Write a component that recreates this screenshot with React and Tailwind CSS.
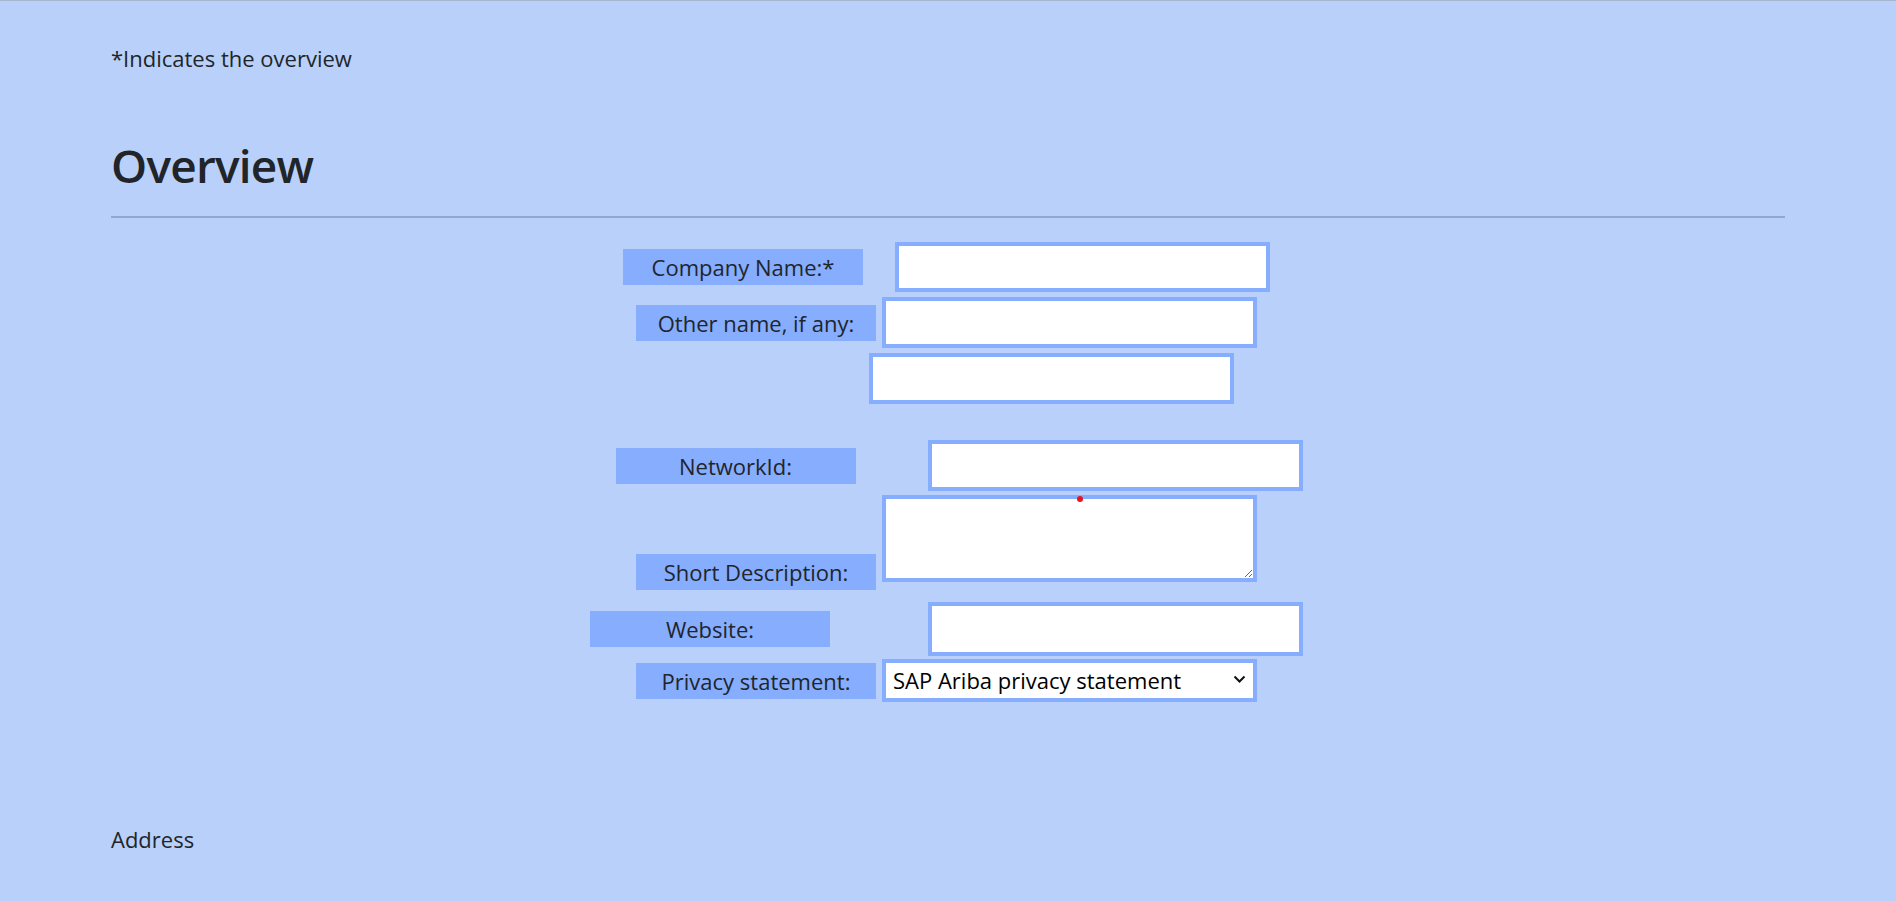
export default function App() {
  const label = "w-[240px] h-[36px] shrink-0 bg-[#86adfe] text-center text-[22px] leading-[36px] text-[#212529]"
  const field = "shrink-0 border-4 border-[#86adfe] bg-white outline-none"

  return (
    <div className="min-h-[901px] bg-[#b9d1fa] border-t border-[#a7b5cf] text-[#212529] font-['Open_Sans','Noto_Sans',sans-serif]">
      <div className="mx-[111px] pt-[42px]">
        <p className="text-[22px] leading-[30px]">*Indicates the overview</p>

        <h1 className="mt-[64px] text-[46px] leading-[56px] font-semibold tracking-[-0.8px]">Overview</h1>
        <div className="mt-[23px] h-[2px] bg-[#91a7cd]" />

        <form className="flex flex-col pr-[3px]">
          <div className="mt-[24px] flex items-center justify-center gap-[32px]">
            <label className={label}>Company Name:*</label>
            <input type="text" className={`${field} w-[375px] h-[50px]`} />
          </div>

          <div className="mt-[5px] flex items-center justify-center gap-[6px]">
            <label className={label}>Other name, if any:</label>
            <input type="text" className={`${field} w-[375px] h-[51px]`} />
          </div>

          <div className="mt-[5px] flex justify-center pl-[209px]">
            <input type="text" className={`${field} w-[365px] h-[51px]`} />
          </div>

          <div className="mt-[36px] flex items-center justify-center gap-[72px] pl-[25px]">
            <label className={label}>NetworkId:</label>
            <input type="text" className={`${field} w-[375px] h-[51px]`} />
          </div>

          <div className="mt-[4px] flex items-start justify-center gap-[6px]">
            <label className={`${label} mt-[59px]`}>Short Description:</label>
            <div className="relative">
              <textarea className={`${field} block w-[375px] h-[87px] resize`} />
              <span className="absolute left-[195px] top-[1px] w-[6px] h-[6px] rounded-full bg-[#e8141e]" />
            </div>
          </div>

          <div className="mt-[12px] flex items-center justify-center gap-[98px]">
            <label className={label}>Website:</label>
            <input type="url" className={`${field} w-[375px] h-[54px]`} />
          </div>

          <div className="mt-[3px] flex items-center justify-center gap-[6px]">
            <label className={label}>Privacy statement:</label>
            <div className="relative">
              <select className={`${field} appearance-none block w-[375px] h-[43px] pl-[7px] text-[22px] text-black`} defaultValue="sap">
                <option value="sap">SAP Ariba privacy statement</option>
              </select>
              <svg className="pointer-events-none absolute right-[11px] top-[16px]" width="13" height="9" viewBox="0 0 13 9" fill="none">
                <path d="M1.5 1.5 L6.5 6.5 L11.5 1.5" stroke="#111" strokeWidth="2" />
              </svg>
            </div>
          </div>
        </form>

        <p className="mt-[122px] text-[22px] leading-[30px]">Address</p>
      </div>
    </div>
  )
}
